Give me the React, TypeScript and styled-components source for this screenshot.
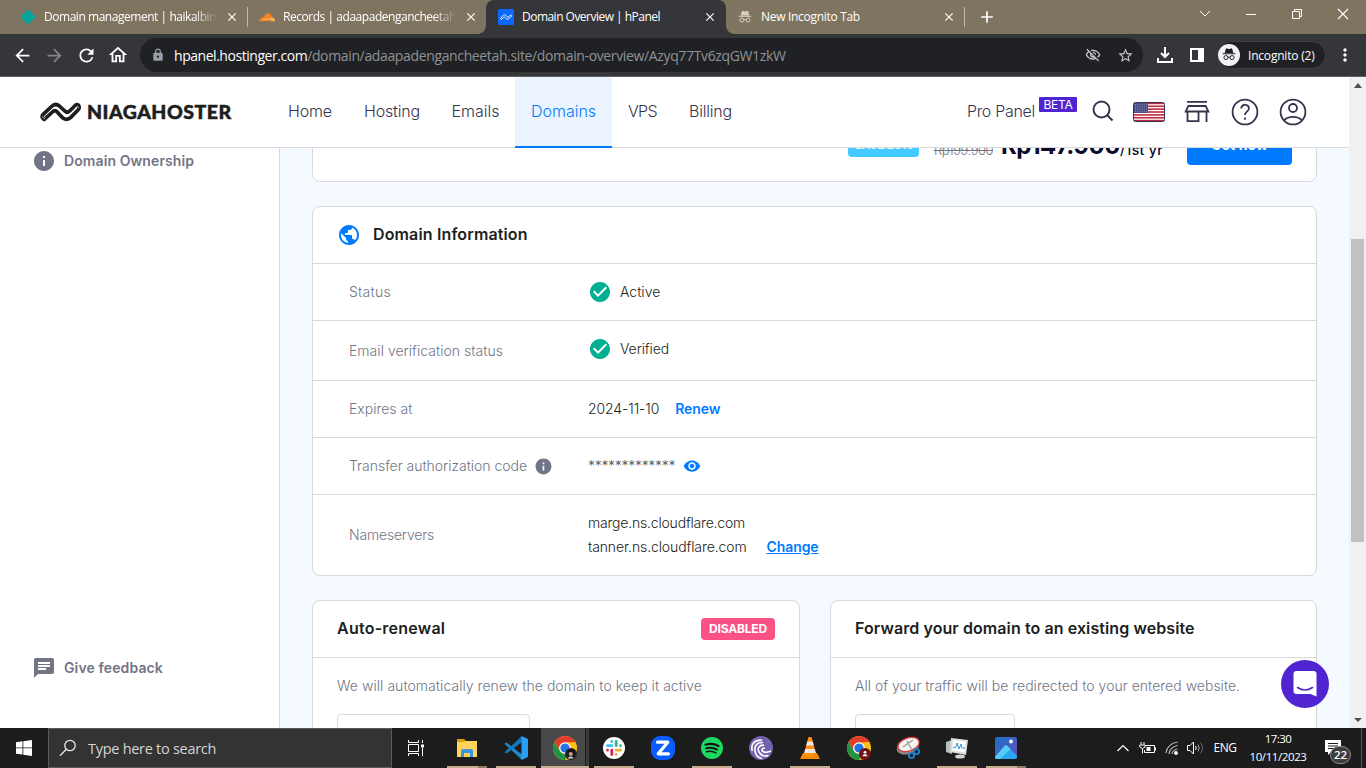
import React from "react";
import styled, { createGlobalStyle, css } from "styled-components";
import {
  MdArrowBack, MdArrowForward, MdRefresh, MdOutlineHome, MdLock, MdOutlineVisibilityOff, MdStarBorder,
  MdMoreVert, MdInfo, MdChat, MdPublic, MdCheckCircle, MdVisibility, MdClose, MdAdd,
} from "react-icons/md";

const Global = createGlobalStyle`
  *, *::before, *::after { box-sizing: border-box; }
  html, body { margin: 0; padding: 0; overflow: hidden; }
  body { font-family: Inter, "Liberation Sans", sans-serif; background: #fff; }
  svg { display: block; flex: none; }
`;

const ink = "#36344d";
const gray = "#727586";
const blue = "#007bff";
const white = "#fff";

/* Page text, in the site's own face */
const T = styled.span<{ $s?: number; $w?: number; $c?: string; $ls?: number; $u?: boolean }>`
  font-size: ${p => p.$s ?? 14}px;
  font-weight: ${p => p.$w ?? 300};
  color: ${p => p.$c ?? "#1d1e20"};
  letter-spacing: ${p => p.$ls ?? 0}px;
  white-space: pre;
  padding-bottom: 2px;
  ${p => p.$u && css`text-decoration: underline;`}
`;

/* System text of the browser frame and the taskbar */
const Ui = styled.span<{ $s?: number; $w?: number; $c?: string; $ls?: number }>`
  font-family: "Open Sans", "Noto Sans", sans-serif;
  font-size: ${p => p.$s ?? 12}px;
  font-weight: ${p => p.$w ?? 400};
  color: ${p => p.$c ?? "#fff"};
  letter-spacing: ${p => p.$ls ?? 0}px;
  white-space: pre;
`;

const Screen = styled.div`
  width: 1366px; height: 768px; display: flex; flex-direction: column; overflow: hidden;
`;

/* Browser frame */
const TabStrip = styled.div`height: 34px; flex: none; display: flex; background: #7f745f;`;
const Tab = styled.div<{ $w: number; $pl: number; $active?: boolean }>`
  position: relative; width: ${p => p.$w}px; padding-left: ${p => p.$pl}px; height: 34px; display: flex; align-items: center;
  ${p => p.$active && css`
    background: #35363a; border-radius: 8px 8px 0 0;
    &::before, &::after { content: ""; position: absolute; bottom: 0; width: 8px; height: 8px; }
    &::before { left: -8px; background: radial-gradient(circle at 0 0, transparent 7.5px, #35363a 8px); }
    &::after { right: -8px; background: radial-gradient(circle at 100% 0, transparent 7.5px, #35363a 8px); }
  `}
`;
const TabIcon = styled.div`width: 16px; height: 16px; display: flex; align-items: center; justify-content: center;`;
const TabTitle = styled.div<{ $fade?: boolean }>`
  width: 172px; margin: 0 9px 0 8px; overflow: hidden; display: flex; align-items: center; height: 20px; padding-bottom: 1px;
  ${p => p.$fade && css`mask-image: linear-gradient(to right, #000 150px, transparent 174px);`}
`;
const TabSep = styled.div`width: 1px; height: 20px; margin-top: 7px; background: #bdb6a8;`;
const NewTab = styled.div`width: 44px; height: 34px; display: flex; align-items: center; justify-content: center;`;
const WinButtons = styled.div`margin-left: auto; display: flex; height: 28px;`;
const WinButton = styled.div`width: 46px; display: flex; align-items: center; justify-content: center;`;
const Toolbar = styled.div`
  height: 43px; flex: none; display: flex; align-items: center; padding-left: 6px; background: #35363a; border-bottom: 1px solid #5f6065;
`;
const ToolButton = styled.div<{ $w?: number }>`width: ${p => p.$w ?? 32}px; display: flex; justify-content: center; align-items: center;`;
const Address = styled.div`
  margin-left: 6px; width: 1003px; height: 34px; border-radius: 17px; background: #202124; display: flex; align-items: center; padding: 0 2px 0 11px;
`;
const Url = styled.div`margin-left: 9px; flex: 1; display: flex;`;
const Incognito = styled.div`
  width: 109px; height: 28px; margin-left: 10px; border-radius: 14px; background: #202124; border: 1px solid #3f4044;
  display: flex; align-items: center; gap: 8px;
`;

/* Page */
const Viewport = styled.div`height: 651px; flex: none; display: flex; overflow: hidden;`;
const Page = styled.div`width: 1349px; display: flex; flex-direction: column;`;
const Header = styled.header`
  height: 71px; flex: none; display: flex; border-bottom: 1px solid #d8d9dc; padding-left: 40px; background: #fff;
`;
const Logo = styled.div`width: 232px; display: flex; align-items: center; gap: 6px;`;
const LogoText = styled.span`
  font-family: Lato, sans-serif; font-size: 19.5px; font-weight: 900; color: #1d1e20; letter-spacing: 0.5px; line-height: 24px;
  -webkit-text-stroke: 0.5px #1d1e20;
`;
const NavItem = styled.div<{ $w: number; $active?: boolean }>`
  width: ${p => p.$w}px; height: 71px; display: flex; align-items: center; justify-content: center; padding-bottom: 1px;
  ${p => p.$active && css`background: #ebf3ff; border-bottom: 2px solid #007bff; padding: 1px 0 0;`}
`;
const HeaderRight = styled.div`margin-left: auto; display: flex; align-items: center; padding-right: 42px;`;
const Beta = styled.div`
  width: 38px; height: 15px; margin: -15px 15px 0 4px; padding-top: 2px; background: #5025d1; display: flex; align-items: center; justify-content: center; border-radius: 1px;
`;
const HIcon = styled.div<{ $w?: number; $ml?: number }>`width: ${p => p.$w ?? 28}px; margin-left: ${p => p.$ml ?? 20}px; display: flex; justify-content: center;`;
const SearchGlyph = styled.div`margin-top: -3px;`;

const Body = styled.div`flex: 1; min-height: 0; display: flex; overflow: hidden;`;
const Sidebar = styled.aside`
  width: 280px; flex: none; border-right: 1px solid #d8d9dc; background: #fff; display: flex; flex-direction: column; justify-content: space-between;
  padding: 1px 0 48px 32px;
`;
const SideItem = styled.div`display: flex; align-items: center; gap: 8px; height: 24px;`;
const Main = styled.main`flex: 1; background: #f4faff; padding: 0 32px; overflow: hidden;`;
const Card = styled.section`background: #fff; border: 1px solid #d8d9dc; border-radius: 8px;`;
const Promo = styled(Card)`
  height: 94px; margin-top: -60px; margin-bottom: 24px; display: flex; justify-content: flex-end; align-items: center; padding: 20px 24px 0 0;
`;
const Save = styled.div`
  width: 71px; height: 24px; border-radius: 4px; background: #45caff; display: flex; align-items: center; justify-content: center; margin-right: 15px;
`;
const Strike = styled(T)`text-decoration: line-through; margin: 12px 8px 0 0;`;
const Price = styled(T)`margin-top: 3px;`;
const Period = styled(T)`margin-top: 10px;`;
const GetNow = styled.div`
  width: 105px; height: 40px; border-radius: 4px; background: #007bff; display: flex; align-items: center; justify-content: center; margin-left: 24px;
`;
const CardHead = styled.div`
  height: 57px; display: flex; align-items: center; gap: 12px; padding: 0 24px; border-bottom: 1px solid #d8d9dc;
`;
const Row = styled.div<{ $h: number }>`
  height: ${p => p.$h}px; display: flex; align-items: center; padding-left: 36px;
  & + & { border-top: 1px solid #d8d9dc; }
`;
const RowLabel = styled.div<{ $down?: number }>`width: 239px; display: flex; align-items: center; gap: 7px; padding-top: ${p => p.$down ?? 0}px;`;
const RowValue = styled.div<{ $gap?: number; $up?: number }>`display: flex; align-items: center; gap: ${p => p.$gap ?? 8}px; padding-bottom: ${p => p.$up ?? 0}px;`;
const ValueText = styled(T)`padding-bottom: 1px;`;
const Servers = styled.div``;
const Server = styled.div`height: 24px; display: flex; align-items: center; gap: 20px;`;
const Pair = styled.div`display: grid; grid-template-columns: 488px 487px; column-gap: 30px; margin-top: 24px;`;
const LowCard = styled(Card)`height: 200px;`;
const LowBody = styled.div`padding: 16px 24px;`;
const Hint = styled.div`height: 25px; display: flex; align-items: center;`;
const Field = styled.div<{ $w: number }>`width: ${p => p.$w}px; height: 40px; margin-top: 15px; border: 1px solid #d8d9dc; border-radius: 4px;`;
const Disabled = styled.div`
  width: 74px; height: 22px; margin-left: auto; border-radius: 4px; background: #fc5185; display: flex; align-items: center; justify-content: center;
`;
const Scroll = styled.div`
  width: 17px; background: #f1f1f1; display: flex; flex-direction: column; align-items: center; padding: 6px 0;
`;
const Thumb = styled.div`width: 13px; height: 303px; margin-top: 151px; background: #c1c1c1;`;
const ScrollArrow = styled.div<{ $down?: boolean }>`
  width: 0; height: 0; border: 4px solid transparent;
  ${p => p.$down ? css`margin-top: auto; border-top-color: #505050; border-bottom: 0;` : css`border-bottom: 5px solid #505050; border-top: 0;`}
`;
const Messenger = styled.div`
  position: absolute; left: 1281px; top: 660px; width: 48px; height: 48px; border-radius: 50%; background: #5025d1;
  display: flex; align-items: center; justify-content: center;
`;

/* Taskbar */
const Taskbar = styled.div`height: 40px; flex: none; display: flex; background: #1c1c1c;`;
const Start = styled.div`width: 48px; display: flex; align-items: center; justify-content: center;`;
const SearchBox = styled.div`
  width: 344px; height: 40px; background: #333; border: 1px solid #5b5b5b; display: flex; align-items: center; padding-left: 10px; gap: 11px;
`;
const TaskView = styled.div`width: 50px; height: 40px; display: flex; align-items: center; padding-left: 16px;`;
const TaskApp = styled.div<{ $run?: boolean; $multi?: boolean; $active?: boolean }>`
  position: relative; width: 49px; height: 40px; display: flex; align-items: center; justify-content: center; padding-left: 1px;
  ${p => p.$active && css`background: linear-gradient(to right, #1c1c1c 1px, #484848 1px, #484848 45px, #1c1c1c 45px, #1c1c1c 46px, #3a3a3a 46px);`}
  ${p => p.$run && css`&::after {
    content: ""; position: absolute; bottom: 0; height: 2px;
    left: ${p.$active ? 1 : 5}px; right: ${p.$active ? 0 : 4}px;
    background: ${p.$multi ? "linear-gradient(to right, #c6ad8b calc(100% - 9px), #8d7d67 calc(100% - 9px))" : "#c6ad8b"};
  }`}
`;
const Tray = styled.div`margin-left: auto; display: flex; align-items: center;`;
const TrayIcon = styled.div<{ $w: number }>`width: ${p => p.$w}px; display: flex; justify-content: center;`;
const Lang = styled.div`width: 28px; margin-left: 4px; display: flex; justify-content: center; padding-bottom: 1px;`;
const Clock = styled.div`width: 78px; display: flex; flex-direction: column; align-items: center; line-height: 18px; padding-bottom: 1px;`;
const Notif = styled.div`position: relative; width: 44px; height: 40px; padding: 12px 0 0 8px;`;
const Badge = styled.div`
  position: absolute; left: 13px; top: 18px; width: 21px; height: 18px; border-radius: 9px; background: #3d3d3d; border: 1px solid #8b8b8b;
  display: flex; align-items: center; justify-content: center; padding-bottom: 1px;
`;
const Edge = styled.div`width: 1px; height: 40px; margin-right: 4px; background: #5a5a5a;`;

const IncogGlyph = ({ size, color, x, y }: { size: number; color: string; x?: number; y?: number }) => (
  <svg x={x} y={y} width={size} height={size} viewBox="0 0 16 16" fill="none">
    <path d="M3 6.200 4.300 1.600c.2-.6.7-.8 1.200-.6L8 1.600 10.500 1c.5-.2 1 0 1.200.6L13 6.200Z" fill={color} />
    <path d="M.8 7.200h14.400" stroke={color} strokeWidth="1.200" />
    <circle cx="4.500" cy="11.500" r="2.300" stroke={color} strokeWidth="1.100" />
    <circle cx="11.500" cy="11.500" r="2.300" stroke={color} strokeWidth="1.100" />
    <path d="M6.800 11.300q1.200-.8 2.400 0" stroke={color} strokeWidth="1.100" />
  </svg>
);

const Wave = () => (
  <svg width="41" height="20" viewBox="0 0 41 20" fill="none" strokeLinejoin="round" strokeLinecap="round">
    <g stroke="#1d1e20" strokeWidth="3.700">
      <path d="M3.800 17.200C1.800 16.400 1.500 14 3.200 12.400L11.500 4.500C14 2.100 17 2 19.300 4L25 9.200C26.500 10.600 28 10.500 29.400 9.200L34.500 4.200C35.600 2.900 37 2.300 38.300 3.200" />
      <path d="M4.300 17.400 13 9.500C14.400 8.300 15.700 8.300 17 9.700L21.800 15C24.300 18 28 18 30.800 15.400L38 8C39.600 6.300 39.500 4.200 38.200 3.100" />
    </g>
    <g stroke="#fff" strokeWidth=".7">
      <path d="M14.500 5.800Q17 4.600 19 6.800L23.500 11" />
      <path d="M2.700 14.600Q3 17.600 5.300 15.800" />
      <path d="M35.800 5.400Q37.800 3.200 38.900 5.400" />
    </g>
  </svg>
);

const Chrome = ({ badge }: { badge: React.ReactNode }) => (
  <svg width="26" height="26" viewBox="0 0 26 26">
    <circle cx="13" cy="13" r="12" fill="#fbc116" />
    <path d="M2.600 7A12 12 0 0 1 23.400 7L13 7.500A5.700 5.700 0 0 0 8 16Z" fill="#e33b2e" />
    <path d="M2.600 7A12 12 0 0 0 13 25L18 16A5.700 5.700 0 0 1 8 15.900Z" fill="#229342" />
    <circle cx="13" cy="13" r="5.800" fill="#fff" />
    <circle cx="13" cy="13" r="4.600" fill="#2672e8" />
    {badge}
  </svg>
);

const Flag = () => (
  <svg width="32" height="20" viewBox="0 0 32 20">
    <rect width="32" height="20" rx="2" fill="#fff" />
    {[0, 1, 2, 3, 4, 5, 6].map(i => <rect key={i} x="1" y={0.6 + i * 2.87} width="30" height="1.600" fill="#c32b43" />)}
    <rect x="1" y="1" width="14" height="10" fill="#484f86" />
    {[0, 1, 2, 3].map(r => [0, 1, 2, 3, 4, 5].map(c => <rect key={`${r}-${c}`} x={2 + c * 2.2} y={2 + r * 2.3} width=".9" height=".9" fill="#8f95bb" />))}
    <rect x=".5" y=".5" width="31" height="19" rx="2" fill="none" stroke={ink} />
  </svg>
);

const Info = ({ label, ls, h, down, extra, children }: { label: string; ls?: number; h: number; down?: number; extra?: React.ReactNode; children: React.ReactNode }) => (
  <Row $h={h}><RowLabel $down={down}><T $c={gray} $ls={ls}>{label}</T>{extra}</RowLabel>{children}</Row>
);

export default function App() {
  return (
    <Screen>
      <Global />
      <TabStrip>
        <Tab $w={247} $pl={20}>
          <TabIcon><svg width="16" height="16" viewBox="0 0 16 16"><rect x="2.500" y="2.500" width="11" height="11" rx="1" transform="rotate(45 8 8)" fill="#05a39b" /></svg></TabIcon>
          <TabTitle $fade><Ui $ls={-0.46}>Domain management | haikalbintang</Ui></TabTitle>
          <MdClose size={14} color={white} />
        </Tab>
        <TabSep />
        <Tab $w={238} $pl={11}>
          <TabIcon><svg width="16" height="16" viewBox="0 0 16 16">
            <path d="M0 12.200C0 10.400 1.200 9.300 2.700 9.300 3 7.800 4.500 7.600 5 8 5.800 5.600 7.500 4.300 9.300 4.300 11.400 4.300 12.800 5.900 13 8L11 12.200Z" fill="#f6821f" />
            <path d="M11.200 12.200C11.700 10.800 12 8.300 13.200 8.300 15 8.300 16 10 16 12.200Z" fill="#fbad41" />
            <path d="M4 10.600 12.500 9.500" stroke="#fff" strokeWidth=".5" />
          </svg></TabIcon>
          <TabTitle $fade><Ui $ls={-0.46}>Records | adaapadengancheetah.site</Ui></TabTitle>
          <MdClose size={14} color={white} />
        </Tab>
        <Tab $w={240} $pl={12} $active>
          <TabIcon><svg width="16" height="16" viewBox="0 0 16 16"><rect width="16" height="16" rx="1.500" fill="#0a68fb" />
            <g fill="none" stroke="#fff" strokeWidth=".9" strokeLinecap="round"><path d="M3 10.300Q2 9.500 3 8.500L5.300 6.300Q6.500 5.200 7.700 6.300L9.200 7.800Q10 8.500 11 7.700L12.500 6.200" /><path d="M3.500 10.300 5.800 8.200Q6.500 7.700 7.200 8.500L8 9.500Q9.500 11 11 9.700L13.200 7.500Q13.800 6.400 12.800 5.900" /></g></svg></TabIcon>
          <TabTitle><Ui $ls={-0.52}>Domain Overview | hPanel</Ui></TabTitle>
          <MdClose size={14} color={white} />
        </Tab>
        <Tab $w={238} $pl={11}>
          <TabIcon><IncogGlyph size={14} color="#d5d0c6" /></TabIcon>
          <TabTitle><Ui $ls={-0.3}>New Incognito Tab</Ui></TabTitle>
          <MdClose size={14} color={white} />
        </Tab>
        <TabSep />
        <NewTab><MdAdd size={20} color={white} /></NewTab>
        <WinButtons>
          <WinButton><svg width="12" height="8" viewBox="0 0 12 8"><path d="m1 1 5 5 5-5" fill="none" stroke="#fff" /></svg></WinButton>
          <WinButton><svg width="10" height="1"><rect width="10" height="1" fill="#fff" /></svg></WinButton>
          <WinButton><svg width="10" height="10" viewBox="0 0 10 10" fill="none" stroke="#fff"><path d="M.5 2.500h7v7h-7zM2.500 2.500v-2h7v7h-2" /></svg></WinButton>
          <WinButton><svg width="12" height="12" viewBox="0 0 12 12"><path d="m1 1 10 10M11 1 1 11" stroke="#fff" strokeWidth="1.100" /></svg></WinButton>
        </WinButtons>
      </TabStrip>
      <Toolbar>
        <ToolButton><MdArrowBack size={21} color="#fff" /></ToolButton>
        <ToolButton><MdArrowForward size={21} color="#85868a" /></ToolButton>
        <ToolButton><MdRefresh size={21} color="#fff" /></ToolButton>
        <ToolButton><MdOutlineHome size={22} color="#fff" /></ToolButton>
        <Address>
          <MdLock size={14} color="#9aa0a6" />
          <Url>
            <Ui $s={14} $ls={-0.46}>hpanel.hostinger.com</Ui>
            <Ui $s={14} $c="#8f9296" $ls={-0.36}>/domain/adaapadengancheetah.site/domain-overview/Azyq77Tv6zqGW1zkW</Ui>
          </Url>
          <ToolButton><MdOutlineVisibilityOff size={16} color="#c7c8ca" /></ToolButton>
          <ToolButton><MdStarBorder size={17} color="#c7c8ca" /></ToolButton>
        </Address>
        <ToolButton $w={44}>
          <svg width="18" height="18" viewBox="0 0 18 18" fill="none" stroke="#fff" strokeWidth="2"><path d="M9 1v9.500M5 7l4 4 4-4M2 12v4h14v-4" /></svg>
        </ToolButton>
        <ToolButton $w={20}><svg width="14" height="14" viewBox="0 0 14 14"><path d="M0 0h14v14H0zM2 2v10h6V2z" fill="#fff" fillRule="evenodd" /></svg></ToolButton>
        <Incognito>
          <svg width="22" height="22" viewBox="0 0 22 22"><circle cx="11" cy="11" r="11" fill="#f1f3f4" /><IncogGlyph x={4} y={3.5} size={14} color="#202124" /></svg>
          <Ui $ls={-0.2}>Incognito (2)</Ui>
        </Incognito>
        <ToolButton $w={37}><MdMoreVert size={20} color="#fff" /></ToolButton>
      </Toolbar>

      <Viewport>
        <Page>
          <Header>
            <Logo><Wave /><LogoText>NIAGAHOSTER</LogoText></Logo>
            <NavItem $w={76}><T $s={16} $c={ink} $ls={-0.15}>Home</T></NavItem>
            <NavItem $w={88}><T $s={16} $c={ink} $ls={-0.17}>Hosting</T></NavItem>
            <NavItem $w={79}><T $s={16} $c={ink}>Emails</T></NavItem>
            <NavItem $w={97} $active><T $s={16} $c={blue}>Domains</T></NavItem>
            <NavItem $w={61}><T $s={16} $c={ink} $ls={-0.6}>VPS</T></NavItem>
            <NavItem $w={75}><T $s={16} $c={ink} $ls={-0.2}>Billing</T></NavItem>
            <HeaderRight>
              <T $s={16} $c={ink} $ls={-0.3}>Pro Panel</T>
              <Beta><T $s={12} $w={400} $c={white} $ls={-0.28}>BETA</T></Beta>
              <SearchGlyph><svg width="22" height="22" viewBox="0 0 22 22" fill="none" stroke={ink} strokeWidth="2"><circle cx="9.500" cy="9.500" r="8" /><path d="m15 15 5.500 5.500" /></svg></SearchGlyph>
              <HIcon $w={32} $ml={19}><Flag /></HIcon>
              <HIcon $w={26} $ml={19}>
                <svg width="26" height="24" viewBox="0 0 26 24" fill="none" stroke={ink} strokeWidth="1.800"><path d="M3 1.900h20M4.300 6h17.400l2.600 5.500H1.700L4.300 6ZM3.500 11.500V21.100h11V12M22.500 11.500V22" /></svg>
              </HIcon>
              <HIcon $ml={21}><svg width="28" height="28" viewBox="0 0 28 28" fill="none" stroke={ink} strokeWidth="1.800"><circle cx="14" cy="14" r="12.400" /><path d="M10.200 10.500c0-5 8-5 7.700.2-.2 2.600-3.900 3-3.900 6.300" /><path d="M14 19.500v2.200" /></svg></HIcon>
              <HIcon><svg width="28" height="28" viewBox="0 0 28 28" fill="none" stroke={ink} strokeWidth="1.800"><circle cx="14" cy="14" r="12.400" /><circle cx="14" cy="10" r="4" /><path d="M5.200 22.300c4-4.600 13.600-4.600 17.600 0" /></svg></HIcon>
            </HeaderRight>
          </Header>
          <Body>
            <Sidebar>
              <SideItem><MdInfo size={24} color={gray} /><T $w={600} $c={gray} $ls={0.09}>Domain Ownership</T></SideItem>
              <SideItem><MdChat size={24} color={gray} /><T $w={600} $c={gray} $ls={0.12}>Give feedback</T></SideItem>
            </Sidebar>
            <Main>
              <Promo>
                <Save><T $s={12} $w={700} $c={white} $ls={-0.5}>SAVE 26%</T></Save>
                <Strike $s={13} $c={gray} $ls={-0.5}>Rp199.900</Strike>
                <Price $s={24} $w={700} $c="#0a0a2a" $ls={-0.48}>Rp147.900</Price>
                <Period $w={500} $c="#0a0a2a" $ls={0.36}>/1st yr</Period>
                <GetNow><T $w={700} $c={white} $ls={0.1}>Get now</T></GetNow>
              </Promo>
              <Card>
                <CardHead><MdPublic size={24} color={blue} /><T $s={16} $w={600} $ls={0.14}>Domain Information</T></CardHead>
                <Info h={56} label="Status" ls={0.25}><RowValue><MdCheckCircle size={24} color="#00b090" /><T>Active</T></RowValue></Info>
                <Info h={60} down={2} label="Email verification status" ls={0.03}><RowValue $up={4}><MdCheckCircle size={24} color="#00b090" /><ValueText $ls={-0.1}>Verified</ValueText></RowValue></Info>
                <Info h={57} label="Expires at"><RowValue $gap={16}><T $ls={-0.1}>2024-11-10</T><T $w={600} $c={blue} $ls={-0.12}>Renew</T></RowValue></Info>
                <Info h={57} label="Transfer authorization code" ls={-0.03} extra={<MdInfo size={19} color={gray} />}>
                  <RowValue><T $ls={-0.3} $c="#55565a">*************</T><MdVisibility size={18} color={blue} /></RowValue>
                </Info>
                <Info h={81} label="Nameservers" ls={-0.19}>
                  <Servers>
                    <Server><T $ls={-0.2}>marge.ns.cloudflare.com</T></Server>
                    <Server><T $ls={-0.11}>tanner.ns.cloudflare.com</T><T $w={600} $c={blue} $u $ls={-0.08}>Change</T></Server>
                  </Servers>
                </Info>
              </Card>
              <Pair>
                <LowCard>
                  <CardHead><T $s={16} $w={600} $ls={0.24}>Auto-renewal</T><Disabled><T $s={12} $w={700} $c={white} $ls={-0.17}>DISABLED</T></Disabled></CardHead>
                  <LowBody><Hint><T $c={gray} $ls={0.045}>We will automatically renew the domain to keep it active</T></Hint><Field $w={193} /></LowBody>
                </LowCard>
                <LowCard>
                  <CardHead><T $s={16} $w={600} $ls={0.09}>Forward your domain to an existing website</T></CardHead>
                  <LowBody><Hint><T $c={gray} $ls={0.015}>All of your traffic will be redirected to your entered website.</T></Hint><Field $w={160} /></LowBody>
                </LowCard>
              </Pair>
            </Main>
          </Body>
        </Page>
        <Scroll><ScrollArrow /><Thumb /><ScrollArrow $down /></Scroll>
      </Viewport>
      <Messenger>
        <svg width="24" height="26" viewBox="0 0 24 26"><path d="M3.500 0h17Q23.500 0 23.500 3v22.500L17.500 23H3.500Q.5 23 .5 20V3Q.5 0 3.500 0Z" fill="#fff" /><path d="M4.500 16.500q7.500 5 15 0" fill="none" stroke="#5025d1" strokeWidth="1.600" strokeLinecap="round" /></svg>
      </Messenger>

      <Taskbar>
        <Start><svg width="16" height="16" viewBox="0 0 16 16" fill="#fff"><path d="M0 2.200 6.500 1.300V7.500H0zM7.300 1.200 16 0v7.500H7.300zM0 8.300h6.500v6.300L0 13.700zM7.300 8.300H16V16l-8.700-1.200z" /></svg></Start>
        <SearchBox>
          <svg width="18" height="18" viewBox="0 0 18 18" fill="none" stroke="#e8e8e8" strokeWidth="1.300"><circle cx="11" cy="6.500" r="5.200" /><path d="M7.300 10.200 1 16.800" /></svg>
          <Ui $s={14.5} $c="#d5d5d5" $ls={-0.28}>Type here to search</Ui>
        </SearchBox>
        <TaskView><svg width="16" height="16" viewBox="0 0 16 16" fill="none" stroke="#fff"><path d="M.5 0v2.500h10V0M.5 16v-2.500h10V16M.5 4.500h10v7H.5zM14.500 0v3M14.500 8v8" /><rect x="13" y="4.500" width="3" height="3" fill="#fff" stroke="none" /></svg></TaskView>
        <TaskApp $run $multi><svg width="22" height="20" viewBox="0 0 22 20"><path d="M1 1h7l2 2h10v4H1z" fill="#e0a000" /><path d="M1 4h7l2-1h11v16H1z" fill="#ffd35c" /><path d="M5 19v-6q0-2 2-2h8q2 0 2 2v6h-3v-4H8v4z" fill="#3b94dd" /></svg></TaskApp>
        <TaskApp $run><svg width="24" height="24" viewBox="0 0 24 24"><path d="M.5 7.800 2.500 6.500 18 18.500V24z" fill="#2489ca" /><path d="M.5 16.200 18 0v6L2.500 17.500z" fill="#1278bd" /><path d="M17.500 0 24 3v18l-6.500 3z" fill="#2aa0f5" /></svg></TaskApp>
        <TaskApp $run $active><Chrome badge={<><circle cx="19" cy="19" r="6" fill="#272325" /><ellipse cx="18.800" cy="18.500" rx="2" ry="2.600" fill="#c09a88" /><path d="M15.500 23.500q3.500-4 6 0" fill="#ddd" /><path d="M15.800 19q-.5-5 3.500-5t3.700 6l-1.500 1q0-4-2.500-4-2.500.2-3.200 2z" fill="#111" /></>} /></TaskApp>
        <TaskApp $run><svg width="24" height="24" viewBox="0 0 24 24"><circle cx="12" cy="12" r="11" fill="#fff" /><g strokeWidth="2.800" strokeLinecap="round"><path d="M9.800 5.500h.01M5.500 9.700h4.300" stroke="#36c5f0" /><path d="M14.200 5.500v4.200M18.500 9.700h.01" stroke="#2eb67d" /><path d="M14.200 14.200h4.300M14.200 18.500h.01" stroke="#ecb22e" /><path d="M9.800 14.200v4.300M5.500 14.200h.01" stroke="#e01e5a" /></g></svg></TaskApp>
        <TaskApp><svg width="24" height="24" viewBox="0 0 24 24"><rect width="24" height="24" rx="9" fill="#0b5cff" /><path d="M6.500 6.200h10.300L7.200 17.800H17.500" fill="none" stroke="#fff" strokeWidth="3.200" strokeLinejoin="round" strokeLinecap="round" /></svg></TaskApp>
        <TaskApp $run><svg width="24" height="24" viewBox="0 0 24 24"><circle cx="12" cy="12" r="11" fill="#1ed760" /><g fill="none" stroke="#141414" strokeLinecap="round"><path d="M5.500 8.700q7-2 13 1.300" strokeWidth="2.200" /><path d="M6 12.300q6-1.500 11 1.300" strokeWidth="1.900" /><path d="M6.500 15.700q5-1.200 9.500 1.200" strokeWidth="1.500" /></g></svg></TaskApp>
        <TaskApp><svg width="24" height="24" viewBox="0 0 24 24"><circle cx="12" cy="12" r="12" fill="#7562ac" /><g fill="none" stroke="#fff" strokeWidth="1.600"><path d="M13 4.200C5 3.500 1.500 9 3.300 15" /><path d="M14 6.500C7.500 6 4.500 11 6.500 17 7.500 20 10 22 13 22.500" /><path d="M15 9.200C10 8.700 8 12.500 10 16s6 4.500 9.500 3.500" /><path d="M16 12c-3 0-4 2-2 3.500s5 .8 8-.5" /></g></svg></TaskApp>
        <TaskApp $run><svg width="22" height="24" viewBox="0 0 22 24"><path d="M4 17h14l3 6H1z" fill="#f58a07" /><path d="M9.500 1h3l5 18q-6.500 3-13 0z" fill="#ff8f0f" /><path d="M8.300 5.500h5.400l1 4H7.300zM6.300 13h9.400l1 4H5.300z" fill="#e9e9e9" /></svg></TaskApp>
        <TaskApp><Chrome badge={<><circle cx="19" cy="19" r="6" fill="#6d1216" /><circle cx="19" cy="17.300" r="1.400" fill="#fff" /><path d="M16.500 21.300q0-2 2.500-2t2.500 2z" fill="#fff" /></>} /></TaskApp>
        <TaskApp><svg width="26" height="24" viewBox="0 0 26 24"><ellipse cx="13" cy="11" rx="11.500" ry="7" transform="rotate(-18 13 11)" fill="#8c8c8c" /><ellipse cx="13.500" cy="8.500" rx="11" ry="6.500" transform="rotate(-18 13.500 8.500)" fill="#f6f3f3" stroke="#d9383a" strokeWidth="1.300" /><path d="m8 11 10-7M12 5l5 9" stroke="#999" strokeWidth="1.200" /><g fill="none" stroke="#1e83c9" strokeWidth="1.900"><circle cx="21.500" cy="15.500" r="2.600" /><circle cx="16.500" cy="19.500" r="2.600" /></g></svg></TaskApp>
        <TaskApp $run><svg width="24" height="24" viewBox="0 0 24 24"><path d="M1 6 7 4v14l-6-2z" fill="#b9bdbd" /><path d="m6 2 17 2-2 15-16-3z" fill="#dcdedd" /><path d="m8 4 13 1.500-1.500 11L7 14.500z" fill="#fbfdff" /><path d="m8 12 3-1 1-4 2 6 2-5 1 4h3" fill="none" stroke="#3e94cf" /><ellipse cx="15" cy="20.500" rx="5" ry="2" fill="#d2d4d4" /></svg></TaskApp>
        <TaskApp $run $multi><svg width="22" height="22" viewBox="0 0 22 22"><defs><linearGradient id="ph" x1="0" y1="0" x2="1" y2="1"><stop offset="0" stopColor="#1d70c9" /><stop offset="1" stopColor="#6650b8" /></linearGradient></defs><rect width="22" height="22" rx="2" fill="url(#ph)" /><path d="M0 20 9.500 9q1.500-1.500 3 0L22 19v1q0 2-2 2H2q-2 0-2-2z" fill="#2aa8f2" /><path d="M0 20 9.500 9q1.500-1.500 3 0l3 3L5 22H2q-2 0-2-2z" fill="#54cdfb" /><circle cx="16" cy="4.500" r="1.900" fill="#fff" /></svg></TaskApp>
        <Tray>
          <TrayIcon $w={24}><svg width="12" height="8" viewBox="0 0 12 8"><path d="m.5 7 5.500-5.500L11.500 7" fill="none" stroke="#fff" strokeWidth="1.200" /></svg></TrayIcon>
          <TrayIcon $w={25}><svg width="17" height="13" viewBox="0 0 17 13" fill="none" stroke="#fff"><path d="M6 3.500h9.500v7h-10V8M2 0v2.500M5 0v2.500M.8 3h5.400v2q-2.700 3-5.400 0zM3.500 6.500v5M16.500 5.500v3" /><rect x="7.500" y="5" width="4" height="4" fill="#fff" stroke="none" /></svg></TrayIcon>
          <TrayIcon $w={23}><svg width="14" height="14" viewBox="0 0 14 14" fill="none" stroke="#b9b9b9" strokeWidth="1.200"><path d="M1 12Q2 3 12.500 1M4 13Q5 6 12.500 4.500M7 13Q7.500 9 12.500 8" /><circle cx="11" cy="12" r="1.300" fill="#fff" stroke="#fff" /></svg></TrayIcon>
          <TrayIcon $w={24}><svg width="17" height="14" viewBox="0 0 17 14" fill="none" stroke="#fff"><path d="M.5 4.500h2.500L6.500 1v12L3 9.500H.5z" /><path d="M8.500 5q1.500 2 0 4" /><path d="M11 3.500q2.500 3.500 0 7" stroke="#aaa" /><path d="M13.500 1.500q4 5.500 0 11" stroke="#666" /></svg></TrayIcon>
          <Lang><Ui $ls={-0.45}>ENG</Ui></Lang>
          <Clock><Ui $s={11.5} $ls={-0.6}>17:30</Ui><Ui $s={11.5} $ls={-0.4}>10/11/2023</Ui></Clock>
          <Notif>
            <svg width="16" height="16" viewBox="0 0 16 16"><path d="M0 0h16v12H6l-3 3v-3H0z" fill="#fff" /><path d="M3 3.500h10M3 6h10M3 8.500h7" stroke="#1c1c1c" /></svg>
            <Badge><Ui $s={11.5} $w={600}>22</Ui></Badge>
          </Notif>
          <Edge />
        </Tray>
      </Taskbar>
    </Screen>
  );
}
